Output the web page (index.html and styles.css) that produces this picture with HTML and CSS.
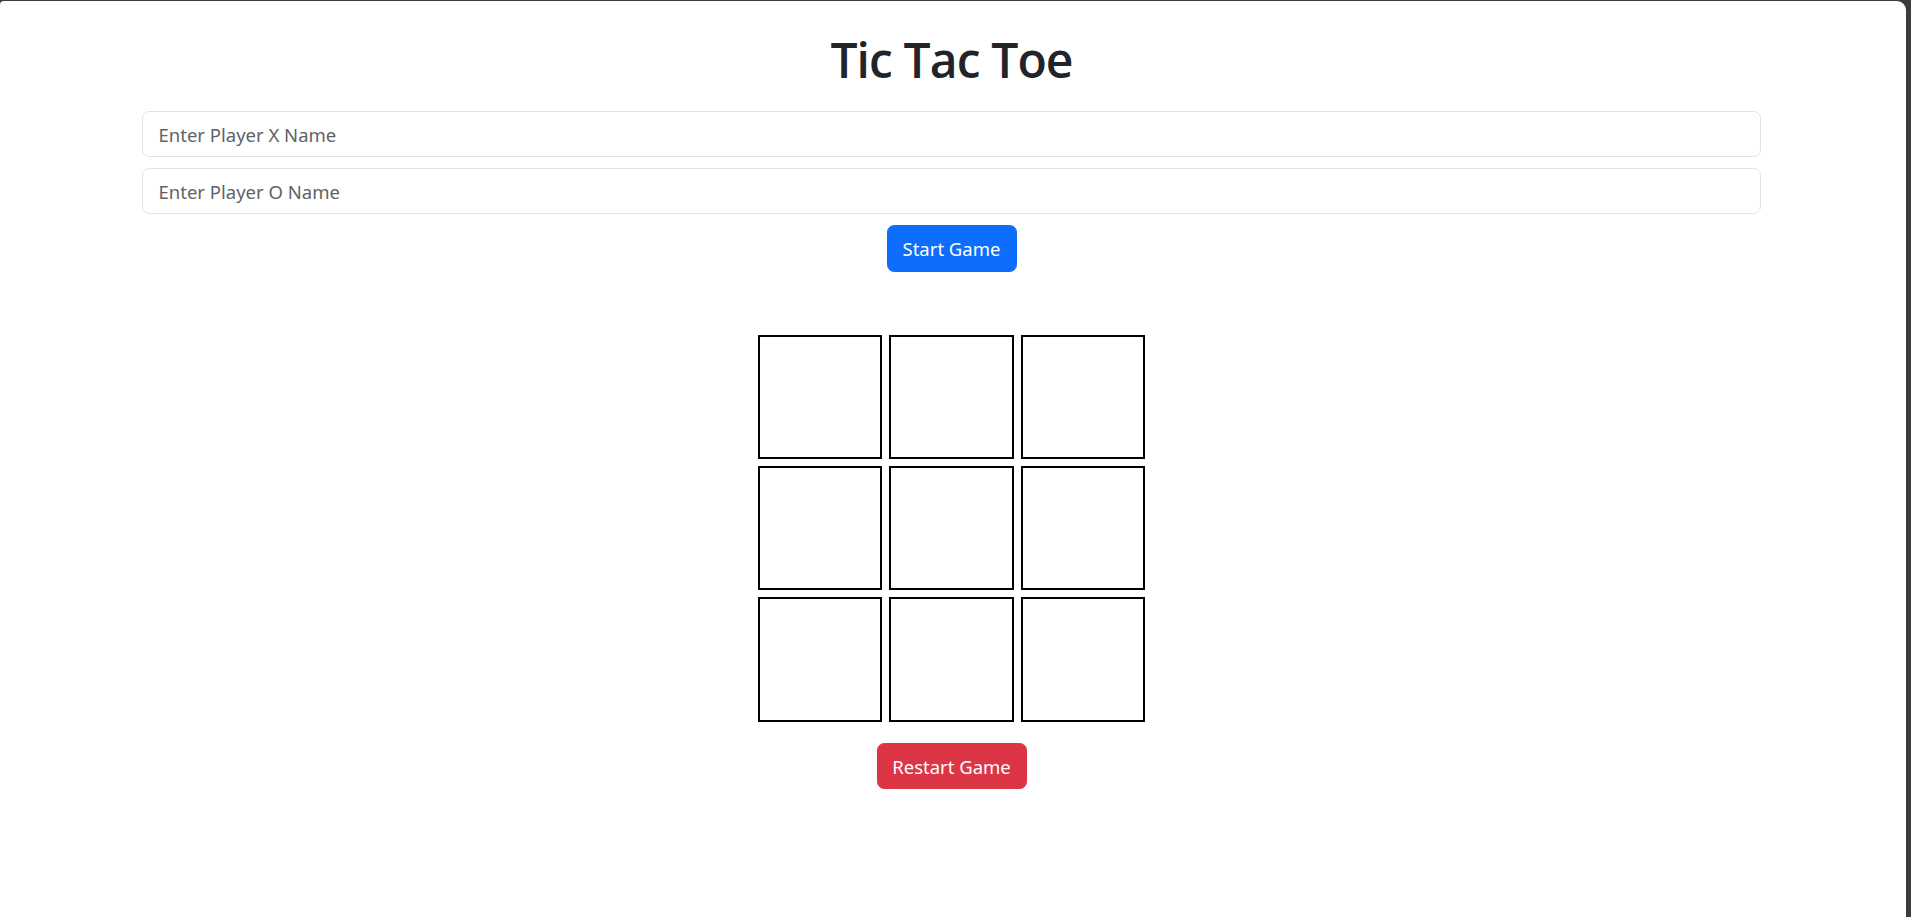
FILE: index.html
```html
<!DOCTYPE html>
<html lang="en">
<head>
<meta charset="utf-8">
<title>Tic Tac Toe</title>
<link rel="stylesheet" href="styles.css">
</head>
<body>
<div class="window">
  <main class="container">
    <h1 class="title">Tic Tac Toe</h1>
    <input class="field" type="text" placeholder="Enter Player X Name">
    <input class="field" type="text" placeholder="Enter Player O Name">
    <div class="center">
      <button class="btn btn-primary" type="button">Start Game</button>
    </div>
    <div class="board">
      <div class="cell"></div><div class="cell"></div><div class="cell"></div>
      <div class="cell"></div><div class="cell"></div><div class="cell"></div>
      <div class="cell"></div><div class="cell"></div><div class="cell"></div>
    </div>
    <div class="center">
      <button class="btn btn-danger" type="button">Restart Game</button>
    </div>
  </main>
</div>
</body>
</html>
```
FILE: styles.css
```css
* { box-sizing: border-box; }
html, body { margin: 0; height: 100%; }
body {
  background: #3c3c3c;
  font-family: "Noto Sans", "Open Sans", sans-serif;
  color: #212529;
}
.window {
  margin: 1px 5px 0 0;
  height: 916px;
  background: #fff;
  border-radius: 4px 9px 0 0;
  overflow: hidden;
}
.container {
  width: 1619px;
  margin: 0 0 0 142px;
  padding-top: 30px;
  display: flex;
  flex-direction: column;
}
.title {
  margin: 0 0 22px;
  font-family: "Open Sans", "Noto Sans", sans-serif;
  font-size: 48px;
  font-weight: 600;
  line-height: 58px;
  text-align: center;
  color: #212529;
  letter-spacing: -0.9px;
}
.field {
  display: block;
  width: 100%;
  height: 46px;
  margin: 0 0 11px;
  padding: 0 15.5px;
  border: 1px solid #dee2e6;
  border-radius: 7.3px;
  font-family: inherit;
  font-size: 18.5px;
  color: #212529;
  background: #fff;
  outline: none;
}
.field::placeholder { color: #5f6368; opacity: 1; }
.center { display: flex; justify-content: center; }
.btn {
  height: 46.5px;
  padding: 0;
  border: 1px solid transparent;
  border-radius: 7.3px;
  font-family: inherit;
  font-size: 18.5px;
  white-space: nowrap;
  color: #fff;
  cursor: pointer;
}
.btn-primary { background: #0d6efd; border-color: #0d6efd; width: 130px; }
.btn-danger { background: #dc3545; border-color: #dc3545; width: 150px; }
.board {
  margin: 63px auto 21px;
  display: grid;
  grid-template-columns: repeat(3, 124.3px);
  grid-auto-rows: 124.3px;
  gap: 7.2px;
}
.cell {
  border: 2px solid #000;
  background: #fff;
}
```
